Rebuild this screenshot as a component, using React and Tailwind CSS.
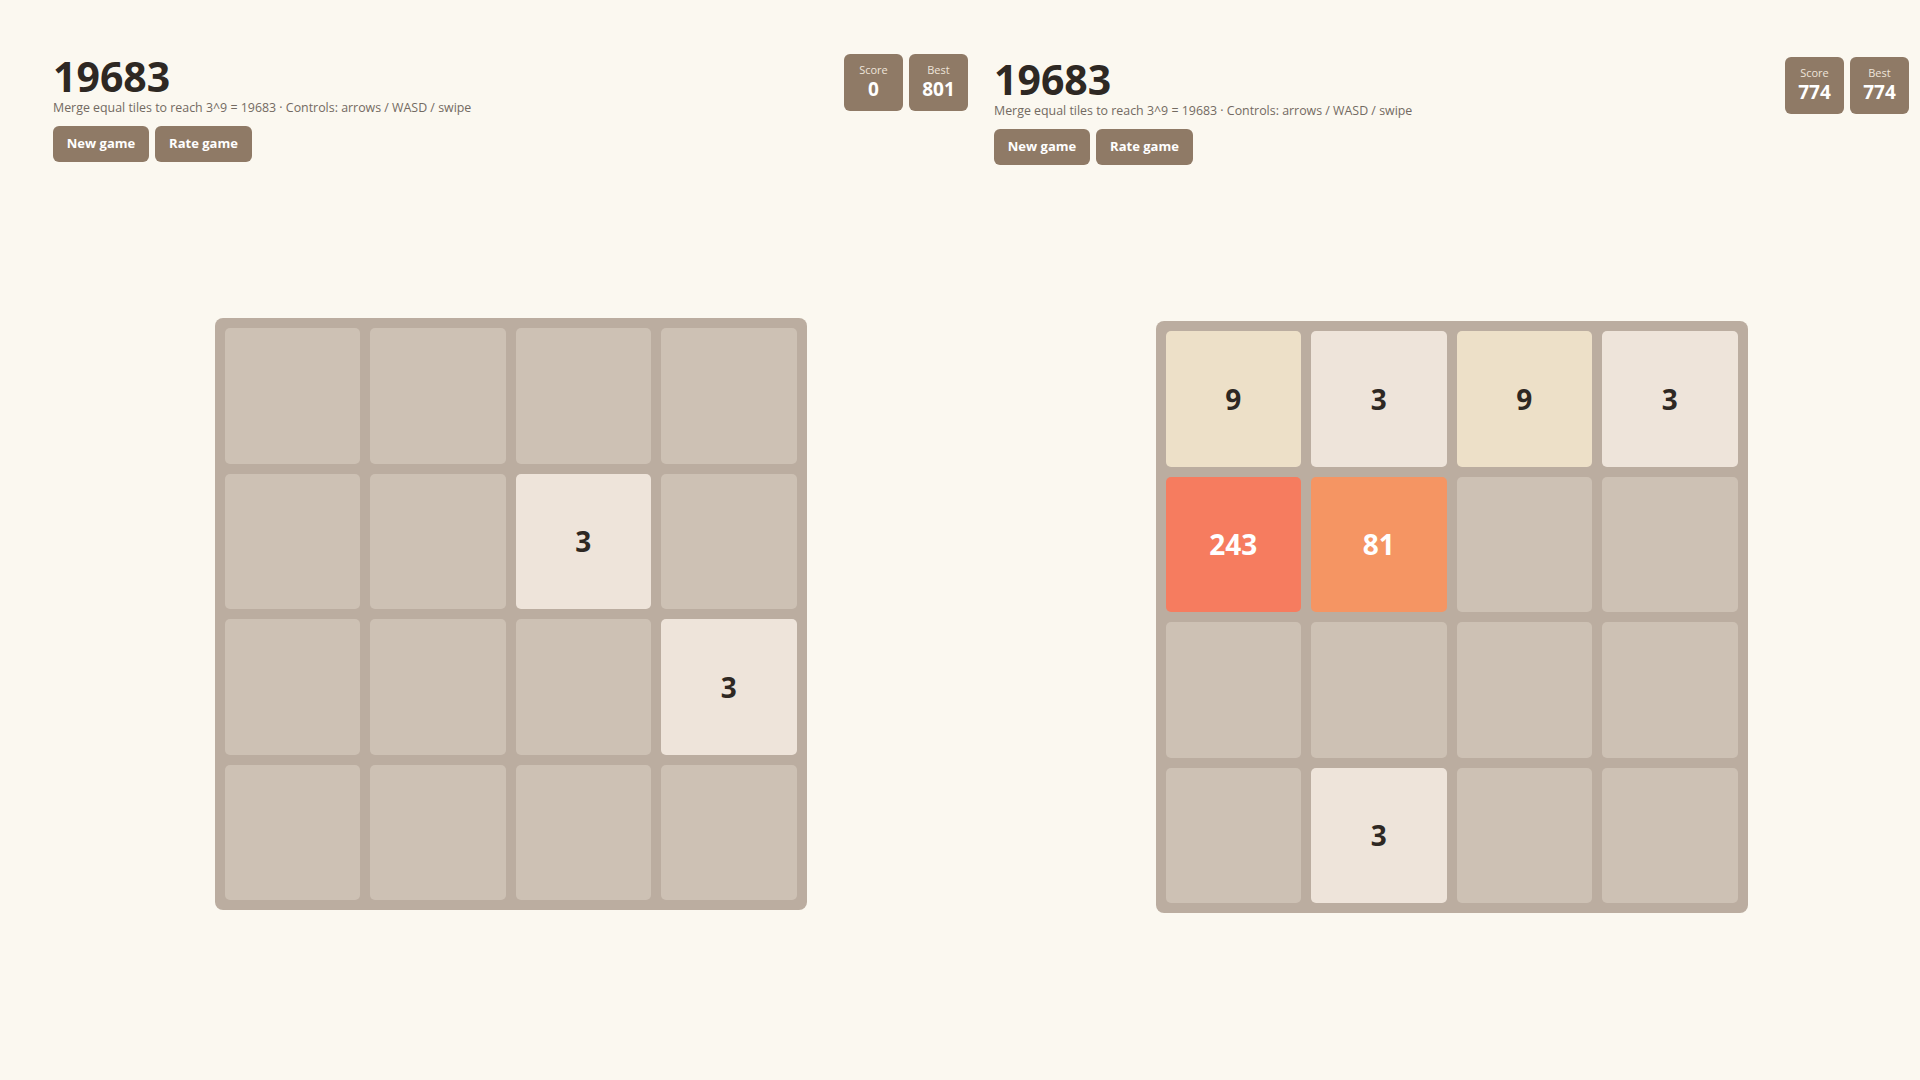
import React from "react";

const tileStyle = {
  0: "bg-[#cdc1b4]",
  3: "bg-[#eee4da] text-[#2e2823]",
  9: "bg-[#ede0c8] text-[#2e2823]",
  27: "bg-[#f2b179] text-white",
  81: "bg-[#f59563] text-white",
  243: "bg-[#f67c5f] text-white",
};

function Tile({ v }) {
  const cls = tileStyle[v] || "bg-[#edcf72] text-white";
  return (
    <div
      className={`aspect-square rounded-[5px] flex items-center justify-center text-[28px] font-bold leading-none ${cls}`}
    >
      {v ? v : ""}
    </div>
  );
}

function Game({ score, best, board, offset }) {
  return (
    <div className={`w-[915px] flex flex-col ${offset}`}>
      <div className="flex justify-between items-start">
        <div className="flex flex-col">
          <h1 className="mt-[1px] text-[41px] leading-[42px] font-bold text-[#2e2823]">19683</h1>
          <p className="mt-[3px] text-[12.4px] leading-[16px] text-[#736a62]">
            Merge equal tiles to reach 3^9 = 19683 · Controls: arrows / WASD / swipe
          </p>
          <div className="mt-[10px] flex gap-[6px]">
            <button className="w-[96px] h-[36px] rounded-[6px] bg-[#8f7a66] text-white text-[13px] font-bold">
              New game
            </button>
            <button className="w-[97px] h-[36px] rounded-[6px] bg-[#8f7a66] text-white text-[13px] font-bold">
              Rate game
            </button>
          </div>
        </div>
        <div className="flex gap-[6px]">
          {[
            ["Score", score],
            ["Best", best],
          ].map(([l, v]) => (
            <div
              key={l}
              className="w-[59px] h-[57px] rounded-[6px] bg-[#8f7a66] flex flex-col items-center pt-[9px]"
            >
              <span className="text-[11px] leading-[14px] text-[#eee4da]">{l}</span>
              <span className="text-[19px] leading-[24px] font-bold text-white">{v}</span>
            </div>
          ))}
        </div>
      </div>
      <div className="mt-[156px] self-center w-[592px] rounded-[8px] bg-[#bbada0] p-[10px] grid grid-cols-4 gap-[10px]">
        {board.flat().map((v, i) => (
          <Tile key={i} v={v} />
        ))}
      </div>
    </div>
  );
}

export default function App() {
  const b1 = [
    [0, 0, 0, 0],
    [0, 0, 3, 0],
    [0, 0, 0, 3],
    [0, 0, 0, 0],
  ];
  const b2 = [
    [9, 3, 9, 3],
    [243, 81, 0, 0],
    [0, 0, 0, 0],
    [0, 3, 0, 0],
  ];
  return (
    <div
      className="w-[1920px] h-[1080px] bg-[#fbf8f0] flex gap-[26px] pl-[53px] pt-[54px] overflow-hidden"
      style={{ fontFamily: '"Open Sans", "Noto Sans", sans-serif' }}
    >
      <Game score={0} best={801} board={b1} offset="" />
      <Game score={774} best={774} board={b2} offset="pt-[3px]" />
    </div>
  );
}
